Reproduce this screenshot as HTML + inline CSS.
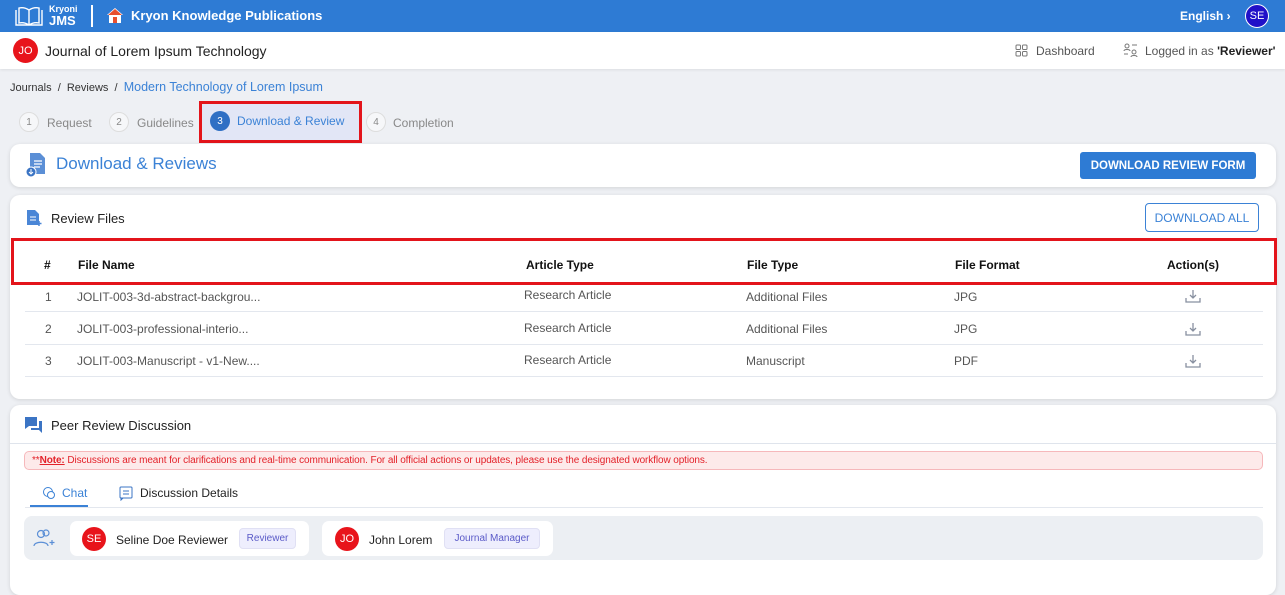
<!DOCTYPE html>
<html><head><meta charset="utf-8"><style>
*{box-sizing:border-box;margin:0;padding:0}
body{width:1285px;height:582px;overflow:hidden;background:#eef0f4;font-family:"Liberation Sans",sans-serif;color:#222;position:relative}
.a{position:absolute;white-space:nowrap}
.card{position:absolute;left:10px;width:1266px;background:#fff;border-radius:10px;box-shadow:0 1px 4px rgba(0,0,0,.12)}
.th{font-size:12px;font-weight:bold;color:#111;top:258px}
.td{font-size:12px;color:#555}
.line{position:absolute;left:25px;width:1238px;height:1px;background:#e3e7ee}
.step{font-size:12px;color:#888}
.circ{position:absolute;width:20px;height:20px;border-radius:50%;border:1px solid #ddd;font-size:10px;color:#888;display:flex;align-items:center;justify-content:center;background:#f6f7f9}
.av{position:absolute;width:24px;height:24px;border-radius:50%;background:#e8141b;color:#fff;font-size:11px;display:flex;align-items:center;justify-content:center}
.ctr{display:flex;align-items:center;justify-content:center}
</style></head><body>
<div class="a" style="left:0;top:0;width:1285px;height:32px;background:#2e7bd4"></div>
<svg class="a" style="left:13px;top:4px" width="32" height="24" viewBox="0 0 32 24" fill="none" stroke="#fff" stroke-width="1.4"><path d="M3 6v15h26V6M6 4v15c4-1 7 0 10 2 3-2 6-3 10-2V4c-4-1-7 0-10 2C13 4 10 3 6 4zM16 6v15"/></svg>
<div class="a" style="left:49px;top:4px;font-size:9px;color:#fff;font-weight:bold">Kryoni</div>
<div class="a" style="left:49px;top:13px;font-size:13px;color:#fff;font-weight:bold">JMS</div>
<div class="a" style="left:91px;top:5px;width:2px;height:22px;background:#fff"></div>
<svg class="a" style="left:106px;top:7px" width="18" height="17" viewBox="0 0 18 17"><path d="M9 1L1 8h2v8h12V8h2z" fill="#fff"/><path d="M9 2L2 8h14z" fill="#e8502f"/><rect x="7" y="10" width="4" height="6" fill="#e8502f"/></svg>
<div class="a" style="left:131px;top:8px;font-size:13px;color:#fff;font-weight:bold">Kryon Knowledge Publications</div>
<div class="a" style="left:1180px;top:9px;font-size:12px;color:#fff;font-weight:bold">English ›</div>
<div class="a ctr" style="left:1245px;top:4px;width:24px;height:24px;border-radius:50%;background:#2010c8;border:1px solid #fff;color:#fff;font-size:11px">SE</div>
<div class="a" style="left:0;top:32px;width:1285px;height:37px;background:#fff;box-shadow:0 1px 3px rgba(0,0,0,.08)"></div>
<div class="av" style="left:13px;top:38px;width:25px;height:25px">JO</div>
<div class="a" style="left:45px;top:43px;font-size:14px;color:#222">Journal of Lorem Ipsum Technology</div>
<svg class="a" style="left:1015px;top:44px" width="13" height="13" viewBox="0 0 13 13" fill="none" stroke="#777"><rect x="1" y="1" width="4.5" height="4.5" rx="1"/><rect x="7.5" y="1" width="4.5" height="4.5" rx="1"/><rect x="1" y="7.5" width="4.5" height="4.5" rx="1"/><rect x="7.5" y="7.5" width="4.5" height="4.5" rx="1"/></svg>
<div class="a" style="left:1036px;top:44px;font-size:12px;color:#555">Dashboard</div>
<svg class="a" style="left:1123px;top:42px" width="16" height="16" viewBox="0 0 16 16" fill="none" stroke="#777"><circle cx="4" cy="4" r="2"/><path d="M1 9c0-2 6-2 6 0"/><circle cx="11" cy="10" r="2"/><path d="M8 15c0-2 6-2 6 0M9 3h5M1 12h4"/></svg>
<div class="a" style="left:1145px;top:44px;font-size:12px;color:#555">Logged in as <b style="color:#222">'Reviewer'</b></div>
<div class="a" style="left:10px;top:80px;font-size:11px;color:#333">Journals &nbsp;/&nbsp; Reviews &nbsp;/&nbsp; <span style="color:#3b82d6;font-size:12.5px">Modern Technology of Lorem Ipsum</span></div>
<div class="circ" style="left:19px;top:112px">1</div><div class="a step" style="left:47px;top:116px">Request</div>
<div class="circ" style="left:109px;top:112px">2</div><div class="a step" style="left:137px;top:116px">Guidelines</div>
<div class="a" style="left:199px;top:101px;width:163px;height:42px;border:3px solid #e3141b;background:#e2e6f6"></div>
<div class="a ctr" style="left:210px;top:111px;width:20px;height:20px;border-radius:50%;background:#2f6fc4;color:#fff;font-size:10px">3</div>
<div class="a" style="left:237px;top:114px;font-size:12px;color:#3b82d6">Download &amp; Review</div>
<div class="circ" style="left:366px;top:112px">4</div><div class="a step" style="left:393px;top:116px">Completion</div>
<div class="card" style="top:144px;height:43px"></div>
<svg class="a" style="left:25px;top:152px" width="22" height="26" viewBox="0 0 22 26"><path d="M5 1h10l5 5v16H5z" fill="#5b8fd6"/><path d="M9 9h8M9 12h8M9 15h6" stroke="#fff" stroke-width="1.3"/><circle cx="6" cy="20" r="5" fill="#3b74c4" stroke="#fff"/><path d="M6 17v5M4 20l2 2 2-2" stroke="#fff" fill="none"/></svg>
<div class="a" style="left:56px;top:154px;font-size:17px;color:#3b82d6">Download &amp; Reviews</div>
<div class="a ctr" style="left:1080px;top:152px;width:176px;height:27px;background:#2e7bd4;border-radius:3px;color:#fff;font-size:11.5px;font-weight:bold">DOWNLOAD REVIEW FORM</div>
<div class="card" style="top:195px;height:204px"></div>
<svg class="a" style="left:26px;top:209px" width="17" height="18" viewBox="0 0 17 18"><path d="M1 1h8l4 4v11H1z" fill="#4a86d6"/><path d="M4 8h6M4 11h6" stroke="#fff"/><path d="M13 12v5M10.5 14.5h5" stroke="#4a86d6" stroke-width="1.5"/></svg>
<div class="a" style="left:51px;top:211px;font-size:13px;color:#222">Review Files</div>
<div class="a ctr" style="left:1145px;top:203px;width:114px;height:29px;border:1px solid #3b82d6;border-radius:4px;color:#3b82d6;font-size:12px">DOWNLOAD ALL</div>
<div class="a" style="left:11px;top:238px;width:1266px;height:47px;border:3px solid #e3141b"></div>
<div class="a th" style="left:44px">#</div>
<div class="a th" style="left:78px">File Name</div>
<div class="a th" style="left:526px">Article Type</div>
<div class="a th" style="left:747px">File Type</div>
<div class="a th" style="left:955px">File Format</div>
<div class="a th" style="left:1167px">Action(s)</div>
<div class="a td" style="left:45px;top:290px">1</div><div class="a td" style="left:77px;top:290px">JOLIT-003-3d-abstract-backgrou...</div><div class="a td" style="left:524px;top:288px">Research Article</div><div class="a td" style="left:746px;top:290px">Additional Files</div><div class="a td" style="left:954px;top:290px">JPG</div>
<div class="line" style="top:311px"></div>
<div class="a td" style="left:45px;top:322px">2</div><div class="a td" style="left:77px;top:322px">JOLIT-003-professional-interio...</div><div class="a td" style="left:524px;top:321px">Research Article</div><div class="a td" style="left:746px;top:322px">Additional Files</div><div class="a td" style="left:954px;top:322px">JPG</div>
<div class="line" style="top:344px"></div>
<div class="a td" style="left:45px;top:354px">3</div><div class="a td" style="left:77px;top:354px">JOLIT-003-Manuscript - v1-New....</div><div class="a td" style="left:524px;top:353px">Research Article</div><div class="a td" style="left:746px;top:354px">Manuscript</div><div class="a td" style="left:954px;top:354px">PDF</div>
<div class="line" style="top:376px"></div>
<svg class="a" style="left:1185px;top:289px" width="16" height="15" viewBox="0 0 16 15" fill="none" stroke="#8890a0" stroke-width="1.3"><path d="M8 1v8M5 6l3 3 3-3M1 9v4h14V9"/></svg>
<svg class="a" style="left:1185px;top:322px" width="16" height="15" viewBox="0 0 16 15" fill="none" stroke="#8890a0" stroke-width="1.3"><path d="M8 1v8M5 6l3 3 3-3M1 9v4h14V9"/></svg>
<svg class="a" style="left:1185px;top:354px" width="16" height="15" viewBox="0 0 16 15" fill="none" stroke="#8890a0" stroke-width="1.3"><path d="M8 1v8M5 6l3 3 3-3M1 9v4h14V9"/></svg>
<div class="card" style="top:405px;height:190px"></div>
<svg class="a" style="left:24px;top:416px" width="20" height="18" viewBox="0 0 20 18"><path d="M1 1h12v9H5l-4 3z" fill="#3b74c4"/><path d="M15 5h3v12l-3-3H7v-2h8z" fill="#3b74c4"/></svg>
<div class="a" style="left:51px;top:418px;font-size:13px;color:#222">Peer Review Discussion</div>
<div class="a" style="left:10px;top:443px;width:1266px;height:1px;background:#dfe4ec"></div>
<div class="a" style="left:24px;top:451px;width:1239px;height:19px;background:#fdeaea;border:1px solid #f6b8bb;border-radius:5px;font-size:10px;color:#e3222a;padding-left:7px;line-height:17px;letter-spacing:-0.1px">**<b style="text-decoration:underline">Note:</b> Discussions are meant for clarifications and real-time communication. For all official actions or updates, please use the designated workflow options.</div>
<svg class="a" style="left:42px;top:486px" width="14" height="14" viewBox="0 0 14 14" fill="none" stroke="#3b82d6"><circle cx="6" cy="6" r="4.5"/><circle cx="9" cy="9" r="3.5" fill="#fff"/></svg>
<div class="a" style="left:62px;top:486px;font-size:12px;color:#3b82d6">Chat</div>
<div class="a" style="left:30px;top:505px;width:58px;height:2px;background:#3b82d6"></div>
<div class="a" style="left:25px;top:507px;width:1238px;height:1px;background:#e3e7ee"></div>
<svg class="a" style="left:119px;top:486px" width="14" height="15" viewBox="0 0 14 15" fill="none" stroke="#3b74c4"><rect x="1" y="1" width="12" height="11" rx="1"/><path d="M4 5h6M4 8h6M2 12v2l2-2"/></svg>
<div class="a" style="left:140px;top:486px;font-size:12px;color:#222">Discussion Details</div>
<div class="a" style="left:24px;top:516px;width:1239px;height:44px;background:#eceff3;border-radius:8px"></div>
<svg class="a" style="left:33px;top:529px" width="24" height="18" viewBox="0 0 24 18" fill="none" stroke="#5b8fd6" stroke-width="1.2"><circle cx="8" cy="5" r="3.5"/><path d="M1 17c0-5 14-5 14 0"/><circle cx="13" cy="4" r="3"/><path d="M19 11v5M16.5 13.5h5"/></svg>
<div class="a" style="left:70px;top:521px;width:239px;height:35px;background:#fff;border-radius:7px"></div>
<div class="av" style="left:82px;top:527px">SE</div>
<div class="a" style="left:116px;top:533px;font-size:12px;color:#222">Seline Doe Reviewer</div>
<div class="a ctr" style="left:239px;top:528px;width:57px;height:21px;background:#eeeefd;border:1px solid #e0e0f4;border-radius:4px;font-size:10px;color:#5a5ac8">Reviewer</div>
<div class="a" style="left:322px;top:521px;width:231px;height:35px;background:#fff;border-radius:7px"></div>
<div class="av" style="left:335px;top:527px">JO</div>
<div class="a" style="left:369px;top:533px;font-size:12px;color:#222">John Lorem</div>
<div class="a ctr" style="left:444px;top:528px;width:96px;height:21px;background:#eeeefd;border:1px solid #e0e0f4;border-radius:4px;font-size:10px;color:#5a5ac8">Journal Manager</div>
</body></html>
